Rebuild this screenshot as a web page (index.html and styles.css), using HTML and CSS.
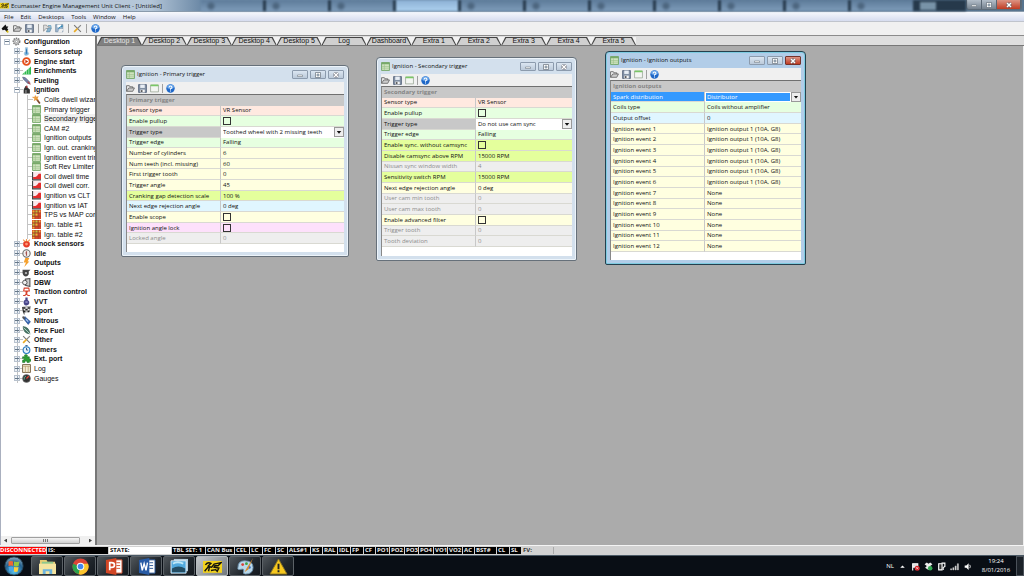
FILE: index.html
```html
<!DOCTYPE html>
<html lang="en">
<head>
<meta charset="utf-8">
<title>Ecumaster Engine Management Unit Client - [Untitled]</title>
<link rel="stylesheet" href="styles.css">
</head>
<body>
<svg class="defs" aria-hidden="true">
<symbol id="open" viewBox="0 0 16 16"><path d="M1 13V3h5l1 2h5v2" fill="#eee" stroke="#555" stroke-width="1.4"/><path d="M1 13l4-6h10l-3 6z" fill="#ccc" stroke="#555" stroke-width="1.3"/></symbol>
<symbol id="save" viewBox="0 0 16 16"><path d="M1 1h14v14H1z" fill="#8291a5" stroke="#526078" stroke-width="1.4"/><path d="M4 1h8v6H4z" fill="#e8eef5"/><path d="M4 10h8v5H4z" fill="#f6f6f6"/><path d="M5 11h3v3H5z" fill="#444"/></symbol>
<symbol id="form" viewBox="0 0 16 16"><path d="M1 2h14v12H1z" fill="#f4f6f2" stroke="#8a9a88" stroke-width="1.2"/><path d="M1 1h14v3H1z" fill="#7ac766"/></symbol>
<symbol id="help" viewBox="0 0 16 16"><circle cx="8" cy="8" r="7.5" fill="#1f68c8"/><ellipse cx="8" cy="5" rx="6" ry="4" fill="#69a6ea"/><path d="M5.5 6q0-2.500 2.500-2.500T10.500 6Q10.500 7.500 8 8.500V10M8 11.500v2" fill="none" stroke="#fff" stroke-width="1.800"/></symbol>
<symbol id="plug" viewBox="0 0 16 16"><path d="M1 8l7-7 2 4 3-1-2 4 2 2-3 4-3-4-4 1z" fill="#111"/><path d="M10 12l3 3" stroke="#d7bd1a" stroke-width="3"/></symbol>
<symbol id="openp" viewBox="0 0 16 16"><path d="M1 13V2h5l1 2h4v4H5z" fill="#ddd" stroke="#777"/><path d="M6 14l3-7h6l-3 7z" fill="#8ab4cf" stroke="#55819d"/><path d="M9 3h5v4" fill="none" stroke="#4790b5" stroke-width="1.500"/></symbol>
<symbol id="savep" viewBox="0 0 16 16"><path d="M1 1h13v13H1z" fill="#9bb3cb" stroke="#688098"/><path d="M4 1h7v5H4z" fill="#fff"/><path d="M5 15l3-6h7l-3 6z" fill="#eee"/><path d="M6 9q2-5 7-5l-1-2m1 2-2 2" fill="none" stroke="#2c86b6" stroke-width="1.600"/></symbol>
<symbol id="tools" viewBox="0 0 16 16"><path d="M2 2l12 12" stroke="#777" stroke-width="2"/><path d="M14 2L8 8" stroke="#888" stroke-width="2"/><path d="M8 8l-6 6" stroke="#e9aa23" stroke-width="3"/></symbol>
<symbol id="gear" viewBox="0 0 16 16"><circle cx="8" cy="8" r="5.500" fill="#ddd" stroke="#777" stroke-width="3" stroke-dasharray="2.500 1.500"/><circle cx="8" cy="8" r="4.500" fill="#ddd" stroke="#888"/><circle cx="8" cy="8" r="2" fill="#fff" stroke="#777"/></symbol>
<symbol id="thermo" viewBox="0 0 16 16"><path d="M6 1h4v8q2 1 2 3t-4 3-4-3 2-3z" fill="#74b5e0" stroke="#b4c6d3"/><path d="M8 4v8" stroke="#3578b5" stroke-width="2"/></symbol>
<symbol id="start" viewBox="0 0 16 16"><circle cx="8" cy="8" r="6" fill="#fff" stroke="#e8501a" stroke-width="3.500"/><path d="M6 5l5 3-5 3z" fill="#c43108"/></symbol>
<symbol id="enrich" viewBox="0 0 16 16"><path d="M0 15L16 1v14z" fill="#2db84d"/><path d="M4 10v5M8 7v8M12 3v12" stroke="#d8f3dc"/></symbol>
<symbol id="fuel" viewBox="0 0 16 16"><path d="M1 2l5 1 8 8-3 3-8-8z" fill="#7785ad" stroke="#444b68"/><path d="M10 10l5 5" stroke="#b44" stroke-width="2"/></symbol>
<symbol id="ign" viewBox="0 0 16 16"><path d="M3 15V8l3-6 3-1 1 4 4 3v7z" fill="#333"/><path d="M6 4l3-3 1 4z" fill="#c33"/><path d="M6 9h2v5H6z" fill="#999"/></symbol>
<symbol id="wand" viewBox="0 0 16 16"><path d="M8 7l6 8" stroke="#7b452a" stroke-width="3"/><path d="M6 1l1 3 4-1-2 3 2 3-4-1-3 2 1-4-4-2h4z" fill="#f2a43b" stroke="#e08a30"/></symbol>
<symbol id="grid" viewBox="0 0 16 16"><path d="M1 1h14v14H1z" fill="#cfe3bf" stroke="#6aa05e" stroke-width="1.500"/><path d="M1 1h14v3H1z" fill="#77a968"/><path d="M6 4v11M2 8h12M2 11h12" stroke="#97bd86"/></symbol>
<symbol id="curve" viewBox="0 0 16 16"><path d="M2 0h14v14H2z" fill="#fbe9ec"/><path d="M2 13V9h4l3-2 3-4h4v10z" fill="#e32c2c"/><path d="M1 0v14h15" fill="none" stroke="#444" stroke-width="2"/></symbol>
<symbol id="table" viewBox="0 0 16 16"><path d="M0 0h16v16H0z" fill="#d8452c"/><path d="M1 1h4v4H1zM6 6h4v4H6zM12 1h3v4h-3zM1 12h4v3H1z" fill="#f0b53a"/><path d="M1 6h4v4H1zM6 1h4v4H6z" fill="#b4c63c"/><path d="M5 0v16M11 0v16M0 5h16M0 11h16" stroke="#8c4520"/></symbol>
<symbol id="knock" viewBox="0 0 16 16"><circle cx="8" cy="9" r="6" fill="#e73b25"/><path d="M2 1l4 4M14 1l-4 4M8 0v4" stroke="#f29b52" stroke-width="2"/><circle cx="8" cy="9" r="2.500" fill="#ff9875"/></symbol>
<symbol id="idle" viewBox="0 0 16 16"><circle cx="8" cy="8" r="6.500" fill="#eee" stroke="#666" stroke-width="1.800"/><path d="M8 4v8M6 7h2" stroke="#a45350" stroke-width="2"/></symbol>
<symbol id="bolt" viewBox="0 0 16 16"><path d="M6 0h7L10 6h3L4 16l3-8H3z" fill="#f5a02c"/></symbol>
<symbol id="boost" viewBox="0 0 16 16"><path d="M1 3h14l-3 3q1 8-5 9-5 0-6-6z" fill="#464646"/><circle cx="7" cy="9" r="3" fill="#aaa" stroke="#222"/></symbol>
<symbol id="dbw" viewBox="0 0 16 16"><path d="M6 2l8-1v14l-8-2z" fill="#ccc" stroke="#555" stroke-width="2"/><circle cx="5" cy="8" r="4" fill="#eee" stroke="#444" stroke-width="1.500"/></symbol>
<symbol id="traction" viewBox="0 0 16 16"><path d="M4 2h8l1 5H3zM5 7q8 2 0 8M11 7q-8 3 0 8M2 15h4M10 15h4" fill="none" stroke="#d7412b" stroke-width="2"/></symbol>
<symbol id="vvt" viewBox="0 0 16 16"><path d="M6 1h4v4q4 3 3 6t-5 4-5-4 3-6z" fill="#4a4789"/><path d="M6 9h4" stroke="#aaaada" stroke-width="2"/></symbol>
<symbol id="flag" viewBox="0 0 16 16"><path d="M1 2l14-1-2 9-11 1z" fill="#eee" stroke="#555"/><path d="M2 2h4v3H2zM10 2h4v3h-4zM6 5h4v3H6zM2 8h4v3H2zM10 8h3v3h-3z" fill="#222"/><path d="M1 2l3 13" stroke="#222" stroke-width="1.500"/></symbol>
<symbol id="nitro" viewBox="0 0 16 16"><path d="M2 4l3-3 10 9-4 5z" fill="#3668b5" stroke="#284682"/><path d="M1 1l4 4" stroke="#555" stroke-width="3"/><path d="M7 6l4 4" stroke="#b9d2f1" stroke-width="2"/></symbol>
<symbol id="leaf" viewBox="0 0 16 16"><path d="M2 1q11 1 12 13Q2 13 2 1z" fill="#48796a" stroke="#234b3d"/><path d="M3 3l12 12" stroke="#c5ddd0" stroke-width="1.500"/></symbol>
<symbol id="clock" viewBox="0 0 16 16"><circle cx="8" cy="9" r="6" fill="#e8f4fc" stroke="#287ac0" stroke-width="2"/><path d="M8 5v4h3M6 1h4" fill="none" stroke="#245080" stroke-width="1.600"/></symbol>
<symbol id="puzzle" viewBox="0 0 16 16"><path d="M1 5h4q-2-4 2-4t2 4h4v4q3-1 3 2t-3 2v2H9q0-3-2-3t-2 3H1v-4q3 0 3-2T1 8z" fill="#2c9d36" stroke="#1c7025"/></symbol>
<symbol id="log" viewBox="0 0 16 16"><path d="M1 1h14v14H1z" fill="#f4ecd5" stroke="#6b5434" stroke-width="1.500"/><path d="M1 4h14M6 4v11M11 4v11" stroke="#b69b68" stroke-width="1.300"/></symbol>
<symbol id="gauge" viewBox="0 0 16 16"><circle cx="8" cy="8" r="7" fill="#333" stroke="#777"/><path d="M8 8l4-4" stroke="#e43" stroke-width="2"/><path d="M4 10V6l3-2" fill="none" stroke="#6b9" stroke-width="1.500"/></symbol>
<symbol id="min" viewBox="0 0 16 16"><path d="M3 8h10v3H3z" fill="#fff" stroke="#5d6873"/></symbol>
<symbol id="max" viewBox="0 0 16 16"><path d="M3 3h10v10H3z" fill="#fff" stroke="#5d6873" stroke-width="1.300"/><path d="M6 6h4v4H6z" fill="#b6c7da" stroke="#5d6873"/></symbol>
<symbol id="close" viewBox="0 0 16 16"><path d="M4 4l8 8M12 4l-8 8" stroke="#5d5d66" stroke-width="5"/><path d="M4 4l8 8M12 4l-8 8" stroke="#fff" stroke-width="3"/></symbol>
<symbol id="horse" viewBox="0 0 24 16"><path d="M0 1h24v15H0z" fill="#f2d21d"/><path d="M2 14l5-6 4 1 3-4 9-2-4 4h-4l-1 2 6 1-2 4-2-2-6 1M3 6q3-4 7-2L6 8M8 9l-1 5" fill="none" stroke="#15150c" stroke-width="1.800"/></symbol>
</svg>

<div class="app">
<header class="titlebar">
  <svg class="logo"><use href="#horse"/></svg>
  <h1>Ecumaster Engine Management Unit Client - [Untitled]</h1>
  <div class="glass"><i></i><i></i><i></i><i class="lit"></i><i></i><i></i><i></i><i></i><i></i><i></i><i></i><b></b></div>
  <div class="syskeys"><button aria-label="Minimize"><svg><use href="#min"/></svg></button><button aria-label="Restore"><svg><use href="#max"/></svg></button><button class="red" aria-label="Close"><svg><use href="#close"/></svg></button></div>
</header>
<nav class="menubar"><button>File</button><button>Edit</button><button>Desktops</button><button>Tools</button><button>Window</button><button>Help</button></nav>
<div class="toolbar main-tools">
  <button aria-label="Connect"><svg><use href="#plug"/></svg></button><button aria-label="Open"><svg><use href="#open"/></svg></button><button aria-label="Save"><svg><use href="#save"/></svg></button><hr>
  <button aria-label="Open project"><svg><use href="#openp"/></svg></button><button aria-label="Save project"><svg><use href="#savep"/></svg></button><hr>
  <button aria-label="Tools"><svg><use href="#tools"/></svg></button><hr>
  <button aria-label="Help"><svg><use href="#help"/></svg></button>
</div>

<div class="workspace">
<aside class="sidebar">
<ul class="tree">
<li class="root"><button class="exp open" aria-label="Collapse"></button><svg><use href="#gear"/></svg><span>Configuration</span></li>
<li class="group"><button class="exp" aria-label="Expand"></button><svg><use href="#thermo"/></svg><span>Sensors setup</span></li>
<li class="group"><button class="exp" aria-label="Expand"></button><svg><use href="#start"/></svg><span>Engine start</span></li>
<li class="group"><button class="exp" aria-label="Expand"></button><svg><use href="#enrich"/></svg><span>Enrichments</span></li>
<li class="group"><button class="exp" aria-label="Expand"></button><svg><use href="#fuel"/></svg><span>Fueling</span></li>
<li class="group"><button class="exp open" aria-label="Collapse"></button><svg><use href="#ign"/></svg><span>Ignition</span></li>
<li class="leaf"><svg><use href="#wand"/></svg><span>Coils dwell wizard</span></li>
<li class="leaf"><svg><use href="#grid"/></svg><span>Primary trigger</span></li>
<li class="leaf"><svg><use href="#grid"/></svg><span class="picked">Secondary trigger</span></li>
<li class="leaf"><svg><use href="#grid"/></svg><span>CAM #2</span></li>
<li class="leaf"><svg><use href="#grid"/></svg><span>Ignition outputs</span></li>
<li class="leaf"><svg><use href="#grid"/></svg><span>Ign. out. cranking</span></li>
<li class="leaf"><svg><use href="#grid"/></svg><span>Ignition event trim</span></li>
<li class="leaf"><svg><use href="#grid"/></svg><span>Soft Rev Limiter</span></li>
<li class="leaf"><svg><use href="#curve"/></svg><span>Coil dwell time</span></li>
<li class="leaf"><svg><use href="#curve"/></svg><span>Coil dwell corr.</span></li>
<li class="leaf"><svg><use href="#curve"/></svg><span>Ignition vs CLT</span></li>
<li class="leaf"><svg><use href="#curve"/></svg><span>Ignition vs IAT</span></li>
<li class="leaf"><svg><use href="#table"/></svg><span>TPS vs MAP corr.</span></li>
<li class="leaf"><svg><use href="#table"/></svg><span>Ign. table #1</span></li>
<li class="leaf"><svg><use href="#table"/></svg><span>Ign. table #2</span></li>
<li class="group"><button class="exp" aria-label="Expand"></button><svg><use href="#knock"/></svg><span>Knock sensors</span></li>
<li class="group"><button class="exp" aria-label="Expand"></button><svg><use href="#idle"/></svg><span>Idle</span></li>
<li class="group"><button class="exp" aria-label="Expand"></button><svg><use href="#bolt"/></svg><span>Outputs</span></li>
<li class="group"><button class="exp" aria-label="Expand"></button><svg><use href="#boost"/></svg><span>Boost</span></li>
<li class="group"><button class="exp" aria-label="Expand"></button><svg><use href="#dbw"/></svg><span>DBW</span></li>
<li class="group"><button class="exp" aria-label="Expand"></button><svg><use href="#traction"/></svg><span>Traction control</span></li>
<li class="group"><button class="exp" aria-label="Expand"></button><svg><use href="#vvt"/></svg><span>VVT</span></li>
<li class="group"><button class="exp" aria-label="Expand"></button><svg><use href="#flag"/></svg><span>Sport</span></li>
<li class="group"><button class="exp" aria-label="Expand"></button><svg><use href="#nitro"/></svg><span>Nitrous</span></li>
<li class="group"><button class="exp" aria-label="Expand"></button><svg><use href="#leaf"/></svg><span>Flex Fuel</span></li>
<li class="group"><button class="exp" aria-label="Expand"></button><svg><use href="#tools"/></svg><span>Other</span></li>
<li class="group"><button class="exp" aria-label="Expand"></button><svg><use href="#clock"/></svg><span>Timers</span></li>
<li class="group"><button class="exp" aria-label="Expand"></button><svg><use href="#puzzle"/></svg><span>Ext. port</span></li>
<li class="group plain"><button class="exp" aria-label="Expand"></button><svg><use href="#log"/></svg><span>Log</span></li>
<li class="group plain"><button class="exp" aria-label="Expand"></button><svg><use href="#gauge"/></svg><span>Gauges</span></li>
</ul>
<div class="scroll"><button class="left" aria-label="Scroll left"></button><div class="thumb"></div><button class="right" aria-label="Scroll right"></button></div>
</aside>

<main class="stage">
<div class="tabrow"><div class="tabs" role="tablist"><button role="tab" aria-selected="true">Desktop 1</button><button role="tab">Desktop 2</button><button role="tab">Desktop 3</button><button role="tab">Desktop 4</button><button role="tab">Desktop 5</button><button role="tab">Log</button><button role="tab">Dashboard</button><button role="tab">Extra 1</button><button role="tab">Extra 2</button><button role="tab">Extra 3</button><button role="tab">Extra 4</button><button role="tab">Extra 5</button></div></div>
<div class="desktop">

<section class="window primary">
<header><svg><use href="#grid"/></svg><h2>Ignition - Primary trigger</h2><button aria-label="Minimize"><svg><use href="#min"/></svg></button><button aria-label="Maximize"><svg><use href="#max"/></svg></button><button aria-label="Close"><svg><use href="#close"/></svg></button></header>
<div class="toolbar"><button aria-label="Open"><svg><use href="#open"/></svg></button><button aria-label="Save"><svg><use href="#save"/></svg></button><button aria-label="Restore defaults"><svg><use href="#form"/></svg></button><hr><button aria-label="Help"><svg><use href="#help"/></svg></button></div>
<div class="sheet"><table>
<colgroup><col class="name"><col></colgroup>
<tbody>
<tr><th colspan="2">Primary trigger</th></tr>
<tr class="peach"><td>Sensor type</td><td>VR Sensor</td></tr>
<tr class="green"><td><label for="p1">Enable pullup</label></td><td><input type="checkbox" id="p1"></td></tr>
<tr class="current"><td><label for="p2">Trigger type</label></td><td class="edit"><span class="combo"><select id="p2"><option>Toothed wheel with 2 missing teeth</option></select><span class="drop"></span></span></td></tr>
<tr class="green"><td>Trigger edge</td><td>Falling</td></tr>
<tr class="cream"><td>Number of cylinders</td><td>6</td></tr>
<tr class="cream"><td>Num teeth (incl. missing)</td><td>60</td></tr>
<tr class="cream"><td>First trigger tooth</td><td>0</td></tr>
<tr class="cream"><td>Trigger angle</td><td>45</td></tr>
<tr class="lime"><td>Cranking gap detection scale</td><td>100 %</td></tr>
<tr class="sky"><td>Next edge rejection angle</td><td>0 deg</td></tr>
<tr class="cream"><td><label for="p3">Enable scope</label></td><td><input type="checkbox" id="p3"></td></tr>
<tr class="pink"><td><label for="p4">Ignition angle lock</label></td><td><input type="checkbox" id="p4"></td></tr>
<tr class="off"><td>Locked angle</td><td>0</td></tr>
</tbody></table></div>
</section>

<section class="window secondary">
<header><svg><use href="#grid"/></svg><h2>Ignition - Secondary trigger</h2><button aria-label="Minimize"><svg><use href="#min"/></svg></button><button aria-label="Maximize"><svg><use href="#max"/></svg></button><button aria-label="Close"><svg><use href="#close"/></svg></button></header>
<div class="toolbar"><button aria-label="Open"><svg><use href="#open"/></svg></button><button aria-label="Save"><svg><use href="#save"/></svg></button><button aria-label="Restore defaults"><svg><use href="#form"/></svg></button><hr><button aria-label="Help"><svg><use href="#help"/></svg></button></div>
<div class="sheet"><table>
<colgroup><col class="name"><col></colgroup>
<tbody>
<tr><th colspan="2">Secondary trigger</th></tr>
<tr class="peach"><td>Sensor type</td><td>VR Sensor</td></tr>
<tr class="green"><td><label for="s1">Enable pullup</label></td><td><input type="checkbox" id="s1"></td></tr>
<tr class="current"><td><label for="s2">Trigger type</label></td><td class="edit"><span class="combo"><select id="s2"><option>Do not use cam sync</option></select><span class="drop"></span></span></td></tr>
<tr class="green"><td>Trigger edge</td><td>Falling</td></tr>
<tr class="lime"><td><label for="s3">Enable sync. without camsync</label></td><td><input type="checkbox" id="s3"></td></tr>
<tr class="lime"><td>Disable camsync above RPM</td><td>15000 RPM</td></tr>
<tr class="off"><td>Nissan sync window width</td><td>4</td></tr>
<tr class="lime"><td>Sensitivity switch RPM</td><td>15000 RPM</td></tr>
<tr class="cream"><td>Next edge rejection angle</td><td>0 deg</td></tr>
<tr class="off"><td>User cam min tooth</td><td>0</td></tr>
<tr class="off"><td>User cam max tooth</td><td>0</td></tr>
<tr class="cream"><td><label for="s4">Enable advanced filter</label></td><td><input type="checkbox" id="s4"></td></tr>
<tr class="off"><td>Trigger tooth</td><td>0</td></tr>
<tr class="off"><td>Tooth deviation</td><td>0</td></tr>
</tbody></table></div>
</section>

<section class="window outputs active">
<header><svg><use href="#grid"/></svg><h2>Ignition - Ignition outputs</h2><button aria-label="Minimize"><svg><use href="#min"/></svg></button><button aria-label="Maximize"><svg><use href="#max"/></svg></button><button class="red" aria-label="Close"><svg><use href="#close"/></svg></button></header>
<div class="toolbar"><button aria-label="Open"><svg><use href="#open"/></svg></button><button aria-label="Save"><svg><use href="#save"/></svg></button><button aria-label="Restore defaults"><svg><use href="#form"/></svg></button><hr><button aria-label="Help"><svg><use href="#help"/></svg></button></div>
<div class="sheet"><table>
<colgroup><col class="name"><col></colgroup>
<tbody>
<tr><th colspan="2">Ignition outputs</th></tr>
<tr class="selected"><td><label for="o1">Spark distribution</label></td><td class="edit"><span class="combo"><select id="o1"><option>Distributor</option></select><span class="drop"></span></span></td></tr>
<tr class="green"><td>Coils type</td><td>Coils without amplifier</td></tr>
<tr class="sky"><td>Output offset</td><td>0</td></tr>
<tr class="cream"><td>Ignition event 1</td><td>Ignition output 1 (10A, G8)</td></tr>
<tr class="cream"><td>Ignition event 2</td><td>Ignition output 1 (10A, G8)</td></tr>
<tr class="cream"><td>Ignition event 3</td><td>Ignition output 1 (10A, G8)</td></tr>
<tr class="cream"><td>Ignition event 4</td><td>Ignition output 1 (10A, G8)</td></tr>
<tr class="cream"><td>Ignition event 5</td><td>Ignition output 1 (10A, G8)</td></tr>
<tr class="cream"><td>Ignition event 6</td><td>Ignition output 1 (10A, G8)</td></tr>
<tr class="cream"><td>Ignition event 7</td><td>None</td></tr>
<tr class="cream"><td>Ignition event 8</td><td>None</td></tr>
<tr class="cream"><td>Ignition event 9</td><td>None</td></tr>
<tr class="cream"><td>Ignition event 10</td><td>None</td></tr>
<tr class="cream"><td>Ignition event 11</td><td>None</td></tr>
<tr class="cream"><td>Ignition event 12</td><td>None</td></tr>
</tbody></table></div>
</section>
</div>
</main>
</div>

<footer class="status"><span class="alarm">DISCONNECTED</span><span>IS:</span><span class="state">STATE:</span><span>TBL SET: 1</span><span>CAN Bus</span><span>CEL</span><span>LC</span><span>FC</span><span>SC</span><span>ALS#1</span><span>KS</span><span>RAL</span><span>IDL</span><span>FP</span><span>CF</span><span>PO1</span><span>PO2</span><span>PO3</span><span>PO4</span><span>VO1</span><span>VO2</span><span>AC</span><span>BST#</span><span>CL</span><span>SL</span><span class="fv">FV:</span></footer>

<div class="taskbar">
<button class="orb" aria-label="Start"><svg viewBox="0 0 22 22"><defs><radialGradient id="og" cx=".5" cy=".8" r=".8"><stop offset="0" stop-color="#5cc3ee"/><stop offset=".6" stop-color="#24618f"/><stop offset="1" stop-color="#8caabd"/></radialGradient></defs><circle cx="11" cy="11" r="10" fill="url(#og)" stroke="#28495e"/><path d="M5 6q3-1 5 0v5q-2-1-5 0z" fill="#ef6734"/><path d="M11 6q3 1 6 0l-1 5q-2 1-5 0z" fill="#94c83d"/><path d="M5 12q3-1 5 0v5q-2-1-4 0z" fill="#4ba7e8"/><path d="M11 12q3 1 5 0l-1 5q-2 1-4 0z" fill="#fcd03e"/></svg></button>
<div class="apps">
<button aria-label="Explorer"><svg viewBox="0 0 20 18"><path d="M2 2h7l1 2h8v12H2z" fill="#e8cc73"/><path d="M4 4h12v6H4z" fill="#8fc88e"/><path d="M1 6h18v11H1z" fill="#f5e4a0"/><path d="M5 12h10v5h-3v-3H8v3H5z" fill="#6db4dd"/></svg></button>
<button aria-label="Chrome"><svg viewBox="0 0 20 18"><circle cx="10" cy="9" r="8.500" fill="#dc4437"/><path d="M10 9L2 6a8.500 8.500 0 0 0 6 11.300z" fill="#2ba24c"/><path d="M10 9L8 17.300A8.500 8.500 0 0 0 18 6h-7z" fill="#fbc62e"/><circle cx="10" cy="9" r="4" fill="#fff"/><circle cx="10" cy="9" r="3" fill="#4587ed"/></svg></button>
<button aria-label="PowerPoint"><svg viewBox="0 0 20 18"><path d="M8 2h11v14H8z" fill="#fff" stroke="#d35230"/><path d="M13 5h4M13 8h4M13 11h4" stroke="#d35230"/><path d="M2 2l11-2v18L2 16z" fill="#d24625"/><path d="M6 13V5h2q3 0 3 2.500T8 10H6" fill="none" stroke="#fff" stroke-width="1.800"/></svg></button>
<button aria-label="Word"><svg viewBox="0 0 20 18"><path d="M8 2h11v14H8z" fill="#fff" stroke="#2b5797"/><path d="M13 5h4M13 8h4M13 11h4" stroke="#2b5797"/><path d="M2 2l11-2v18L2 16z" fill="#285ba5"/><path d="M4 5l1.500 8L7.500 6l2 7L11 5" fill="none" stroke="#fff" stroke-width="1.500"/></svg></button>
<button aria-label="Photos"><svg viewBox="0 0 20 18"><path d="M4 1h15v13H4z" fill="#b5ccda"/><path d="M1 3h16v13H1z" fill="#51a9dd" stroke="#dceaf2"/><path d="M2 11q7-4 14 0v4H2z" fill="#244d63"/><path d="M3 6q5-3 11 0" stroke="#bde7f8" stroke-width="2" fill="none"/></svg></button>
<button class="on" aria-label="Ecumaster"><svg><use href="#horse"/></svg></button>
<button aria-label="Paint"><svg viewBox="0 0 20 18"><path d="M9 3q9 0 9 7 0 7-8 7-3 0-2-3t-3-2-3-2q0-7 7-7z" fill="#b9d8ea" stroke="#6f94b0"/><circle cx="7" cy="7" r="1.500" fill="#d93f38"/><circle cx="11" cy="6" r="1.500" fill="#3ba448"/><circle cx="14" cy="10" r="1.500" fill="#3367c6"/><path d="M18 0l-7 11-2 4 4-3z" fill="#d48c36"/></svg></button>
<button aria-label="Warning"><svg viewBox="0 0 20 18"><path d="M10 1l9 16H1z" fill="#f7c81e" stroke="#8a7525"/><path d="M10 6v6M10 13v2" stroke="#222" stroke-width="2"/></svg></button>
</div>
<div class="tray"><span>NL</span>
<svg viewBox="0 0 16 16"><path d="M4 10l4-4 4 4z" fill="#fff"/></svg>
<svg viewBox="0 0 16 16"><path d="M3 2v13M3 3h9v6H3" stroke="#fff" stroke-width="2" fill="#ddd"/><circle cx="11" cy="11" r="4.500" fill="#d8282e"/><path d="M9 9l4 4M13 9l-4 4" stroke="#fff"/></svg>
<svg viewBox="0 0 16 16"><path d="M5 1l3 2 3-2 4 3-4 3 3 3-6 4-6-4 3-3-4-3z" fill="#eee"/><circle cx="11" cy="11" r="4" fill="#33a852"/></svg>
<svg viewBox="0 0 16 16"><path d="M3 3h6v11H3z" fill="#333" stroke="#fff" stroke-width="2"/><path d="M8 2h6v6l-3 2v4" fill="none" stroke="#fff" stroke-width="2"/></svg>
<svg viewBox="0 0 16 16"><path d="M1 14v-2h2v2zM5 14v-4h2v4zM9 14V7h2v7zM13 14V3h2v11z" fill="#fff" stroke="#aaa"/></svg>
<svg viewBox="0 0 16 16"><path d="M3 6h3l4-4v12l-4-4H3z" fill="#fff"/><path d="M12 5q2 3 0 6" fill="none" stroke="#fff" stroke-width="1.500"/></svg>
<time><span>19:24</span><span>8/01/2016</span></time></div>
<button class="peek" aria-label="Show desktop"></button>
</div>
</div>
</body>
</html>
```

FILE: styles.css
```css
* { box-sizing: border-box; }
body { margin: 0; font: 6px/8px "Open Sans", "Noto Sans", sans-serif; color: #111; }
button { margin: 0; padding: 0; border: 0; background: none; font: inherit; color: inherit; }
h1, h2, ul, hr { margin: 0; padding: 0; font: inherit; }
svg { display: block; flex: none; }
.defs { display: none; }
.app { display: flex; flex-direction: column; height: 100vh; overflow: hidden; background: #f0f0f0; }

/* Main title bar */
.titlebar { display: flex; align-items: center; flex: none; height: 12px; background: linear-gradient(90deg, #bccbda, #b4c6d8 150px, #6d8aa7 200px, #57748f); border-bottom: 1px solid #8a9bac; }
.logo { width: 9px; height: 7px; }
.titlebar h1 { margin-left: 2px; white-space: nowrap; color: #111; }
.glass { display: flex; flex: 1; align-self: stretch; margin-left: 39px; filter: blur(1px); background: #26394b; gap: 3px; overflow: hidden; }
.glass i { flex: 0 0 62px; background: radial-gradient(circle at 10px 6px, #4c657e 2px, transparent 5px), linear-gradient(#5c7a99, #7e9cba); }
.glass .lit { background: linear-gradient(#8cb0d4, #acd0ef); }
.glass b { width: 16px; height: 8px; margin: 2px 4px; background: #7893a8; }
.syskeys { display: flex; align-self: flex-start; margin-right: 2px; border: 1px solid #5d6b78; border-top: 0; border-radius: 0 0 3px 3px; overflow: hidden; }
.syskeys button { width: 15px; height: 9px; display: grid; place-items: center; background: linear-gradient(#b4bfca, #74818e); border-right: 1px solid #596673; }
.syskeys svg { width: 8px; height: 8px; }
.syskeys .red { width: 24px; }
.red, .syskeys .red { background: linear-gradient(#dc9484, #c03c23); }

.menubar { display: flex; flex: none; gap: 7px; height: 10px; padding: 1px 4px; background: linear-gradient(#f6f8fc, #d6dcef); border-bottom: 1px solid #c0c4cc; }

.toolbar { display: flex; align-items: center; gap: 3px; flex: none; height: 12px; background: #f0f0f0; }
.toolbar svg { width: 9px; height: 9px; }
.toolbar hr { width: 1px; height: 9px; border: 0; background: #a0a0a0; }
.main-tools { height: 13px; padding-left: 1px; }
.main-tools hr { margin: 0 1px; }

.workspace { display: flex; flex: 1; min-height: 0; border-top: 1px solid #8b8b8b; }

/* Configuration tree */
.sidebar { display: flex; flex-direction: column; flex: 0 0 97px; background: #fff; border-left: 1px solid #aab0bf; border-right: 2px solid #777; overflow: hidden; }
.tree { display: grid; grid-auto-rows: 1fr; height: 346px; margin-top: 1px; list-style: none; font: 7px/9px "Liberation Sans", Arial, sans-serif; }
.tree li { display: flex; align-items: center; min-height: 0; white-space: nowrap; }
.tree svg { width: 9px; height: 9px; margin: 0 3px 0 2px; }
.root { padding-left: 3px; font-weight: bold; }
.group { padding-left: 13px; font-weight: bold; background: linear-gradient(#c4c4c4, #c4c4c4) 16px 0 / 1px 100% no-repeat, linear-gradient(#c4c4c4, #c4c4c4) 16px 50% / 6px 1px no-repeat; }
.leaf { padding-left: 29px; background: linear-gradient(#c4c4c4, #c4c4c4) 16px 0 / 1px 100% no-repeat, linear-gradient(#c4c4c4, #c4c4c4) 26px 0 / 1px 100% no-repeat, linear-gradient(#c4c4c4, #c4c4c4) 26px 50% / 6px 1px no-repeat; }
.plain { font-weight: normal; }
.picked { background: #f0f0f0; }
.exp { flex: none; width: 6px; height: 6px; border: 1px solid #b8c2ce; background: linear-gradient(#678, #678) 50% 50% / 4px 1px no-repeat, linear-gradient(#9ab, #9ab) 2px 0 / 1px 4px no-repeat, #eef1f5; }
.exp.open { background: linear-gradient(#678, #678) 50% 50% / 4px 1px no-repeat, #fff; }
.scroll { display: flex; align-items: center; height: 9px; margin-top: auto; background: #f0f0f0; padding: 0 3px; justify-content: space-between; }
.thumb { flex: 0 0 69px; height: 7px; margin-right: auto; margin-left: 4px; border: 1px solid #a0a0a0; border-radius: 1px; background: repeating-linear-gradient(90deg, #777 0 1px, transparent 1px 2px) center / 5px 3px no-repeat, linear-gradient(#f6f6f6, #cfcfcf); }
.left, .right { width: 3px; height: 4px; background: #444; clip-path: polygon(100% 0, 100% 100%, 0 50%); }
.right { clip-path: polygon(0 0, 100% 50%, 0 100%); }

/* Desktop tabs */
.stage { display: flex; flex-direction: column; flex: 1; min-width: 0; }
.tabrow { flex: none; height: 10px; padding-top: 1px; background: #dedede; border-bottom: 1px solid #777; }
.tabs { display: grid; grid-template-columns: repeat(12, 1fr); width: 539px; height: 8px; background: #f2f2f2; }
.tabs button { position: relative; z-index: 0; font: 7px/8px "Liberation Sans", Arial, sans-serif; background: #444; clip-path: polygon(4px 0, calc(100% - 4px) 0, 100% 100%, 0 100%); }
.tabs button::before { content: ""; position: absolute; z-index: -1; inset: 1px 1px 0; background: #d0d0d0; clip-path: polygon(4px 0, calc(100% - 4px) 0, 100% 100%, 0 100%); }
.tabs [aria-selected="true"] { color: #e6e6e6; }
.tabs [aria-selected="true"]::before { background: #808080; }
.desktop { position: relative; flex: 1; background: #ababab; border-right: 1px solid #eee; }

/* Child windows float over the desktop */
.window { position: absolute; display: flex; flex-direction: column; padding: 0 4px 4px; background: #d3e0ed; border: 1px solid #66707a; border-radius: 4px 4px 2px 2px; box-shadow: inset 0 0 0 1px #edf4fa; }
.window.active { background: #b2cde8; border-color: #24404e; box-shadow: inset 0 0 0 1px #7ecbe0; }
.primary { left: 24px; top: 19px; width: 228px; height: 192px; }
.secondary { left: 279px; top: 11px; width: 201px; height: 204px; }
.outputs { left: 508px; top: 5px; width: 201px; height: 214px; }
.window header { display: flex; align-items: center; flex: none; height: 16px; gap: 2px; }
.window h2 { flex: 1; white-space: nowrap; }
.window header svg { width: 9px; height: 9px; }
.window header button { display: grid; place-items: center; width: 16px; height: 9px; border: 1px solid #8c9bad; border-radius: 1px; background: linear-gradient(#dbe6f1, #bccada); }
.window header button svg { width: 8px; height: 8px; }
.window header .red { background: linear-gradient(#dc9484, #c03c23); border-color: #74332b; }
.sheet { flex: 1; background: #fff; border-top: 1px solid #707070; border-left: 1px solid #888; }
table { width: 100%; border-collapse: separate; border-spacing: 0; table-layout: fixed; line-height: 8px; }
.primary table { height: 149px; }
.secondary table { height: 160px; }
.outputs table { height: 171px; }
.name { width: 94px; }
tr { height: 10px; }
th, td { padding: 0 2px; white-space: nowrap; border-bottom: 1px solid #d9d9d2; }
th { text-align: left; color: #858585; background: #c8c8c8; border-color: #c8c8c8; }
td:first-child { border-right: 1px solid #c8c8c8; }
.peach { background: #ffe9e0; }
.green { background: #e6ffe0; }
.cream { background: #ffffe0; }
.lime { background: #e4ff9c; }
.sky { background: #e0f6ff; }
.pink { background: #fde0fb; }
.off { background: #eee; color: #8c8c8c; }
.current { background: #c8c8c8; }
.selected { background: #3399ff; color: #fff; }
.edit { padding: 0; background: #fff; border: 0; }
input[type="checkbox"] { appearance: none; display: block; width: 8px; height: 8px; margin: 0; border: 1px solid #333; background: transparent; }
.combo { display: flex; align-items: center; height: 10px; }
select { appearance: none; flex: 1; min-width: 0; height: 9px; margin: 0; padding: 0 2px; border: 0; border-radius: 0; background: #fff; font: inherit; color: #111; }
.selected select { height: 8px; margin: 0 1px; padding: 0 1px; background: #3399ff; color: #fff; }
.drop { flex: none; width: 10px; height: 10px; border: 1px solid #999; background: #eee; display: grid; place-items: center; }
.drop::before { content: ""; width: 5px; height: 3px; background: #111; clip-path: polygon(0 0, 100% 0, 50% 100%); }

/* Status strip */
.status { display: grid; grid-template-columns: 46px 61px 62px 33px 28px 14px 12px 12px 11px 22px 11px 14px 12px 12px 11px 13px 14px 13px 14px 13px 14px 11px 21px 12px 11px 32px; gap: 1px; flex: none; height: 10px; padding: 1px 0; background: #d2d2d2; border-top: 1px solid #f4f4f4; font-weight: bold; line-height: 7px; }
.status span { padding-left: 1px; background: #000; color: #eee; white-space: nowrap; }
.status .alarm { padding: 0; background: #f00; color: #fff; }
.status .state { background: #fff; color: #111; }
.status .fv { background: none; color: #333; border-right: 1px solid #aaa; }

/* Taskbar */
.taskbar { display: flex; align-items: stretch; flex: none; height: 21px; background: #090e15; border-top: 1px solid #4b5a66; color: #fff; }
.orb { width: 31px; padding-right: 3px; display: grid; place-items: center; }
.orb svg { width: 20px; height: 20px; }
.apps { display: flex; gap: 1px; }
.apps button { width: 32px; display: grid; place-items: center; border: 1px solid #5c6267; border-radius: 2px; background: linear-gradient(135deg, #50565b, #20262c 60%, #14191f); }
.apps svg { width: 19px; height: 17px; }
.apps .on { background: linear-gradient(135deg, #c2c6c9, #72787e); border-color: #b5babd; }
.tray { display: flex; align-items: center; gap: 4px; margin-left: auto; }
.tray svg { width: 9px; height: 9px; }
.tray time { display: flex; flex-direction: column; width: 32px; margin-left: 4px; text-align: center; line-height: 9px; }
.peek { width: 8px; margin-left: 4px; border: 1px solid #4a5159; background: #1b2128; }
```
